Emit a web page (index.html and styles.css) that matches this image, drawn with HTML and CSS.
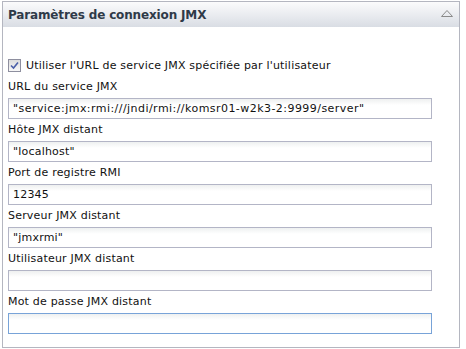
FILE: index.html
```html
<!DOCTYPE html>
<html lang="fr">
<head>
<meta charset="utf-8">
<link rel="stylesheet" href="styles.css">
</head>
<body>
<div class="panel">
  <div class="header">
    <span class="title">Paramètres de connexion JMX</span>
    <svg class="collapse" width="12" height="8" viewBox="0 0 12 8"><path d="M0.5 7.5 L6 1.5 L11.5 7.5 Z" fill="none" stroke="#8a8a8a" stroke-width="1"/></svg>
  </div>
  <div class="body">
    <label class="check-row">
      <span class="checkbox"><svg width="9" height="9" viewBox="0 0 9 9"><path d="M1 4.5 L3.5 7 L8 1.5" fill="none" stroke="#4a5fa8" stroke-width="1.6"/></svg></span>
      <span>Utiliser l'URL de service JMX spécifiée par l'utilisateur</span>
    </label>
    <div class="field">
      <div class="label">URL du service JMX</div>
      <div class="input url">"service:jmx:rmi:///jndi/rmi://komsr01-w2k3-2:9999/server"</div>
    </div>
    <div class="field">
      <div class="label">Hôte JMX distant</div>
      <div class="input">"localhost"</div>
    </div>
    <div class="field">
      <div class="label">Port de registre RMI</div>
      <div class="input">12345</div>
    </div>
    <div class="field">
      <div class="label">Serveur JMX distant</div>
      <div class="input">"jmxrmi"</div>
    </div>
    <div class="field">
      <div class="label">Utilisateur JMX distant</div>
      <div class="input"></div>
    </div>
    <div class="field">
      <div class="label">Mot de passe JMX distant</div>
      <div class="input focus"></div>
    </div>
  </div>
</div>
</body>
</html>
```
FILE: styles.css
```css
html, body {
  margin: 0;
  padding: 0;
  background: #fff;
}
body {
  font-family: "DejaVu Sans", sans-serif;
  font-size: 11px;
  color: #111;
  letter-spacing: 0.2px;
}
.panel {
  margin: 1px 0 0 2px;
  width: 456px;
  height: 345px;
  border: 1px solid #b4b6c0;
  display: flex;
  flex-direction: column;
}
.header {
  height: 25px;
  background: linear-gradient(#fbfbfc, #d9dde4);
  display: flex;
  align-items: center;
  justify-content: space-between;
  padding: 0 6px 0 5px;
}
.title {
  font-weight: bold;
  font-size: 12px;
  color: #2f3a48;
  letter-spacing: -0.15px;
}
.collapse {
  margin-top: -4px;
}
.body {
  padding: 27px 0 0 5px;
  display: flex;
  flex-direction: column;
}
.check-row {
  height: 22px;
  display: flex;
  align-items: center;
  gap: 5px;
}
.checkbox {
  width: 11px;
  height: 11px;
  border: 1px solid #8e8f9f;
  background: linear-gradient(#dcdcdc, #f8f8f8);
  display: flex;
  align-items: center;
  justify-content: center;
}
.field {
  display: flex;
  flex-direction: column;
}
.label {
  height: 22px;
  line-height: 22px;
}
.input {
  box-sizing: border-box;
  width: 424px;
  height: 21px;
  border: 1px solid #b3b5c6;
  background: linear-gradient(#eef0f0, #fff 6px);
  line-height: 19px;
  padding-left: 4px;
  white-space: nowrap;
  overflow: hidden;
}
.input.url {
  letter-spacing: 0.45px;
}
.input.focus {
  border-color: #78a3d8;
}
```
